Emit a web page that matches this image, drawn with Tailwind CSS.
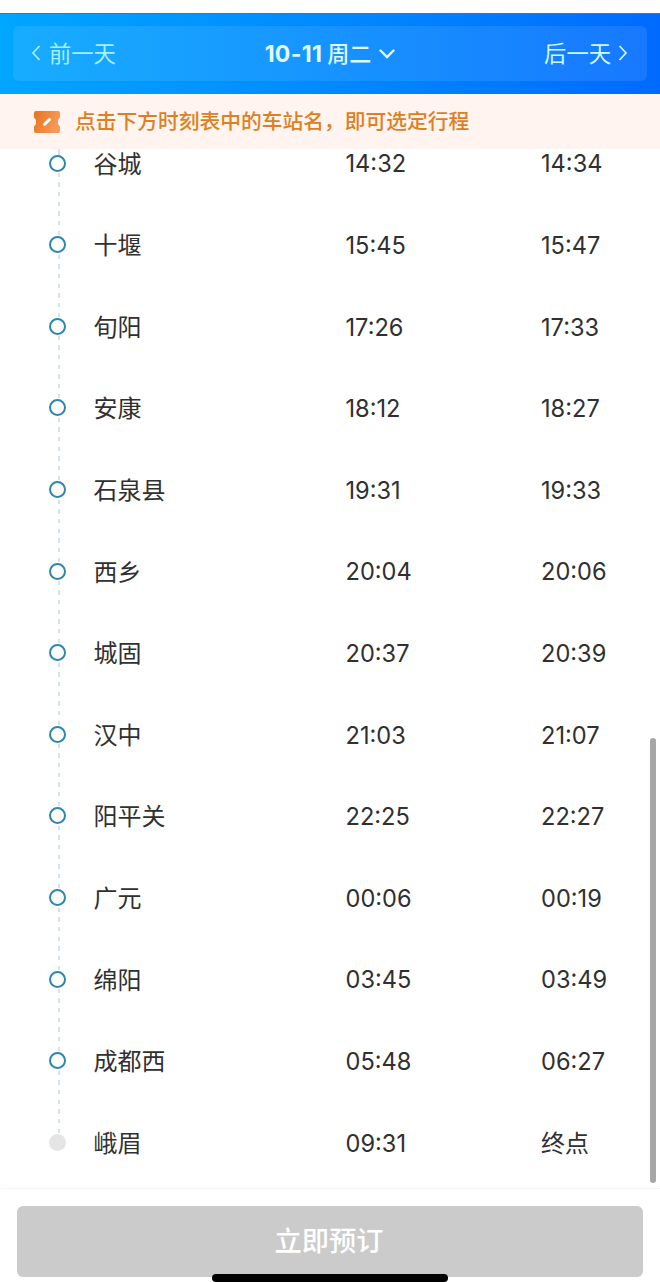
<!DOCTYPE html>
<html lang="zh-CN">
<head>
  <meta charset="UTF-8" />
  <meta name="viewport" content="width=device-width, initial-scale=1.0" />
  <title>时刻表</title>
  <script src="https://cdn.jsdelivr.net/npm/@tailwindcss/browser@4"></script>
</head>
<body class="bg-white font-['Inter','Noto_Sans_CJK_SC',sans-serif] text-[#303030]">
  <div class="relative flex flex-col h-[1282px] pt-[13px] overflow-hidden">

    <!-- DATE BAR -->
    <header class="h-[81px] shrink-0 px-[13px] pt-[12px] bg-linear-to-r from-[#00a6ff] to-[#006aff] border-t border-[#1c7fd0]">
      <div class="h-[55px] pt-[2px] pl-[18px] pr-[19px] flex items-center justify-between rounded-md bg-white/9 text-[22.300px] leading-none">
        <button class="flex items-center gap-[8px] text-[#a5f0ff]">
          <svg class="w-[10px] h-[18px] -mt-[2px]" viewBox="0 0 10 18" fill="none" stroke="currentColor" stroke-width="1.7"><path d="M8.500 2 2 9l6.500 7" /></svg>
          前一天
        </button>
        <button class="flex items-center gap-[8px] text-[#dffcff]">
          <span class="text-[22px]"><span class="text-[23px] font-bold tracking-[0.300px]">10-11</span> <span class="-ml-[1px] font-medium">周二</span></span>
          <svg class="w-[16px] h-[12px] -mt-[2px]" viewBox="0 0 16 12" fill="none" stroke="currentColor" stroke-width="2.4" stroke-linecap="round"><path d="M1.500 2.500 8 9l6.500-6.500" /></svg>
        </button>
        <button class="flex items-center gap-[7px] text-[#cffaff]">
          后一天
          <svg class="w-[10px] h-[18px] -mt-[2px]" viewBox="0 0 10 18" fill="none" stroke="currentColor" stroke-width="1.7"><path d="M1.500 2 8 9l-6.500 7" /></svg>
        </button>
      </div>
    </header>

    <!-- NOTICE -->
    <div class="h-[55px] shrink-0 pl-[34px] flex items-center gap-[15px] bg-[#fff4ef] text-[#dd7f22]">
      <svg class="w-[26px] h-[22px]" viewBox="0 0 26 22">
        <defs>
          <linearGradient id="ticket" x1="0" y1="0" x2="1" y2="0.300">
            <stop offset="0" stop-color="#e8731f" />
            <stop offset="1" stop-color="#f59a58" />
          </linearGradient>
        </defs>
        <path fill="url(#ticket)" d="M2 0h22a2 2 0 0 1 2 2v4.500l-2 2.500v4l2 2.500V20a2 2 0 0 1-2 2H2a2 2 0 0 1-2-2v-4.500L2 13V9L0 6.500V2a2 2 0 0 1 2-2z" />
        <path d="m10.500 13.500 5-5" stroke="#fff" stroke-width="3" stroke-linecap="round" />
      </svg>
      <p class="pt-[1px] text-[20.750px] leading-none font-medium whitespace-nowrap">点击下方时刻表中的车站名，即可选定行程</p>
    </div>

    <!-- STATIONS -->
    <main class="h-[1039px] shrink-0 overflow-hidden">
      <ul id="stationList" class="-mt-[26.700px]"></ul>
    </main>

    <!-- BOOKING BUTTON -->
    <footer class="grow border-t border-[#f4f4f4] shadow-[0_-3px_5px_rgba(0,0,0,0.02)] px-[17px] pt-[17px]">
      <button class="w-full h-[71px] rounded-md bg-[#cbcbcb] text-white text-[27.200px] font-medium leading-none flex items-center justify-center pr-[2px]">立即预订</button>
    </footer>

    <!-- scrollbar and home indicator float over the page -->
    <div class="absolute left-[650px] top-[738px] w-[6px] h-[445px] rounded-full bg-[#a6a6a6]"></div>
    <div class="absolute left-[212px] top-[1274px] w-[236px] h-[8px] rounded-full bg-black"></div>
  </div>

  <script>
    const stations = [
      ["谷城", "14:32", "14:34"],
      ["十堰", "15:45", "15:47"],
      ["旬阳", "17:26", "17:33"],
      ["安康", "18:12", "18:27"],
      ["石泉县", "19:31", "19:33"],
      ["西乡", "20:04", "20:06"],
      ["城固", "20:37", "20:39"],
      ["汉中", "21:03", "21:07"],
      ["阳平关", "22:25", "22:27"],
      ["广元", "00:06", "00:19"],
      ["绵阳", "03:45", "03:49"],
      ["成都西", "05:48", "06:27"],
      ["峨眉", "09:31", "终点"]
    ];

    const listEl = document.getElementById("stationList");

    stations.forEach(([name, arrive, depart], i) => {
      const last = i === stations.length - 1;
      const dot = last
        ? "bg-[#e5e5e5]"
        : "bg-white border-2 border-[#2e86b0]";
      // each line runs from its own dot down to the next one
      const below = last
        ? ""
        : `<span class="absolute left-[9px] top-1/2 w-[2px] h-full bg-[repeating-linear-gradient(to_bottom,#d3e3e8_0_4.500px,transparent_4.500px_9.660px)]"></span>`;
      // the first row also shows the line coming from the station above
      const above = i === 0
        ? `<span class="absolute left-[9px] bottom-1/2 w-[2px] h-[15px] bg-[#d3e3e8]"></span>`
        : "";
      const li = document.createElement("li");
      li.className = "h-[81.620px] pl-[49px] grid grid-cols-[44.500px_252px_195.500px_1fr] items-center text-[24px] leading-none";
      li.innerHTML = `
        <div class="relative h-full flex items-center">
          ${above}${below}
          <span class="relative z-10 w-[17px] h-[17px] rounded-full ${dot}"></span>
        </div>
        <span class="pt-[3px]">${name}</span>
        <span class="pt-[2px] text-[23.600px]">${arrive}</span>
        <span class="${last ? "pt-[3px]" : "pt-[2px] text-[23.600px]"}">${depart}</span>
      `;
      listEl.appendChild(li);
    });
  </script>
</body>
</html>
